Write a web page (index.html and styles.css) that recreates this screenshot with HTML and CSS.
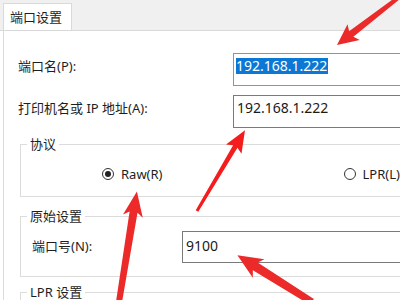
FILE: index.html
```html
<!DOCTYPE html>
<html>
	<head>
		<meta charset="UTF-8" />
		<title>端口设置</title>
		<link rel="stylesheet" href="styles.css">
	</head>

	<body>
		<div class="window">
			<div class="tabs">
				<div class="tab">端口设置</div>
			</div>

			<div class="page">
				<div class="row">
					<label class="lbl">端口名(P):</label>
					<div class="field focused"><span class="sel">192.168.1.222</span></div>
				</div>
				<div class="row row-ip">
					<label class="lbl">打印机名或 IP 地址(A):</label>
					<div class="field">192.168.1.222</div>
				</div>

				<fieldset class="group proto">
					<legend>协议</legend>
					<div class="radios">
						<span class="radio checked"><i></i>Raw(R)</span>
						<span class="radio lpr"><i></i>LPR(L)</span>
					</div>
				</fieldset>

				<fieldset class="group raw">
					<legend>原始设置</legend>
					<div class="row">
						<label class="lbl lbl-port">端口号(N):</label>
						<div class="field">9100</div>
					</div>
				</fieldset>

				<fieldset class="group lpr-group">
					<legend>LPR 设置</legend>
				</fieldset>
			</div>
		</div>

		<!-- the red annotation arrows drawn over the dialog -->
		<svg class="arrows" width="400" height="300" viewBox="0 0 400 300">
			<g fill="#ec2a2a">
				<polygon transform="translate(398,-2) rotate(142.4)" points="0,-2 59,-3.5 56,-10 77,0 56,10 59,3.5 0,2" />
				<polygon fill="#f41c1c" transform="translate(197,211) rotate(-59.3)" points="0,-1.5 75,-2.5 72,-9 94,0 72,9 75,2.5 0,1.5" />
				<polygon transform="translate(119,302) rotate(-80.8)" points="0,-3 91,-4 87,-10 112,0 87,10 91,4 0,3" />
				<polygon transform="translate(312,302) rotate(-147.9)" points="0,-3.5 67,-4.5 63,-11 88,0 63,11 67,4.5 0,3.5" />
			</g>
		</svg>
	</body>
</html>
```

FILE: styles.css
```css
html, body {
	margin:0px; padding:0px;
	width:400px; height:300px;
	overflow:hidden;
	background:#ffffff; color:#1e1e1e;
}

body {
	font-family: "Noto Sans", "Noto Sans CJK SC", sans-serif;
	font-size:13px;
	position:relative;
}

/* the dialog runs on past the window, so clip it */
.window {
	width:400px; height:300px;
	overflow:hidden;
}

/* tab strip */
.tabs {
	height:30px;
	background:#f0f0f0;
	border-bottom:1px solid #d9d9d9;
	display:flex;
}

.tab {
	margin:3px 0px -1px 3px;
	width:69px; height:27px;
	box-sizing:border-box;
	border:1px solid #d9d9d9; border-bottom:none;
	background:#ffffff;
	padding:5px 0px 0px 6px;
	line-height:16px;
}

/* tab page */
.page {
	margin-left:3px;
	border-left:1px solid #dcdcdc;
	padding:22px 0px 0px 14px;
	height:300px;
}

.row { display:flex; align-items:flex-start }
.row-ip { margin-top:9px }

.lbl {
	width:215px;
	padding-top:5px;
	line-height:16px;
	flex:none;
}

.field {
	flex:none;
	width:220px; height:33px;
	box-sizing:border-box;
	border:1px solid #7a7a7a;
	padding:4px 0px 0px 3px;
	font-size:14px; line-height:16px;
	color:#1a1a1a;
}

.field.focused {
	border-color:#6aa0b8;
	padding-left:2px;
}

.sel {
	display:inline-block;
	background:#0a78d4; color:#ffffff;
	height:16px; padding-right:1px;
}

/* group boxes */
.group {
	margin:0px; padding:0px;
	border:1px solid #dcdcdc;
	margin-left:2px;
	width:420px;
}

.group legend {
	margin-left:6px;
	padding:0px 3px;
	line-height:16px;
}

.proto { margin-top:8px }
.raw   { margin-top:11px }
.lpr-group { margin-top:7px; height:40px }

.radios {
	height:44px;
	display:flex; align-items:center;
	padding:0px 0px 0px 81px;
}

.radio { display:flex; align-items:center }
.radio i {
	width:12px; height:12px;
	box-sizing:border-box;
	border:1px solid #333333; border-radius:50%;
	margin-right:7px;
	display:flex; align-items:center; justify-content:center;
}
.radio.checked i::after {
	content:"";
	width:6px; height:6px;
	border-radius:50%;
	background:#222222;
}
.radio.lpr { margin-left:182px }
.radio.lpr i { margin-right:6px }

.raw .row { padding:7px 0px 13px 11px }
.lbl-port { width:150px; padding-top:7px }
.raw .field { height:32px; padding-top:6px }

/* annotation overlay */
.arrows {
	position:absolute;
	left:0px; top:0px;
	pointer-events:none;
}
```
